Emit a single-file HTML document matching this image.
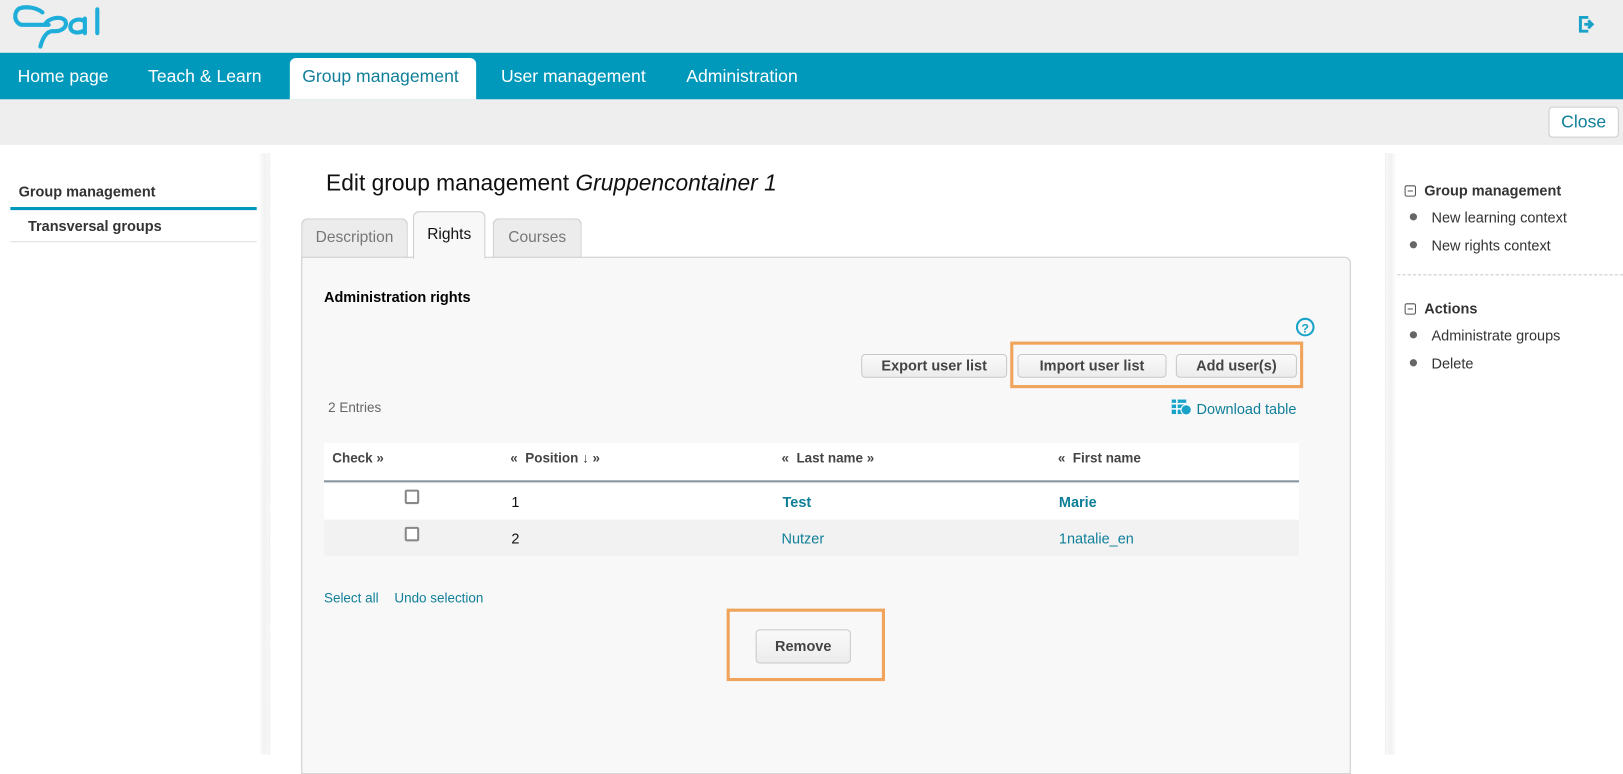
<!DOCTYPE html>
<html><head><meta charset="utf-8"><style>
*{box-sizing:border-box;margin:0;padding:0}
body{width:1623px;height:729px;position:relative;overflow:hidden;background:#fff;font-family:"Liberation Sans",Arial,sans-serif;color:#333}
#w{position:absolute;left:0;top:0;width:1568px;height:705px;transform:scale(1.03508);transform-origin:0 0}
.a{position:absolute}
.nav{top:51px;left:0;width:1568px;height:45px;background:#0099bb}
.nav span{position:absolute;top:13px;color:#fff;font-size:17px}
.btn{position:absolute;border:1px solid #c8c8c8;border-radius:4px;background:linear-gradient(#fafafa,#ececec);font-weight:bold;color:#444;font-size:14px;text-align:center;line-height:20px}
.link{color:#0f7f99}
.dot{position:absolute;width:7px;height:7px;border-radius:50%;background:#666}
.minus{position:absolute;width:11px;height:11px;border:1px solid #555;border-radius:2px}
.minus:after{content:"";position:absolute;left:2px;top:4px;width:5px;height:1px;background:#555}
.cb{position:absolute;width:14px;height:14px;border:2px solid #888;border-radius:2px;background:#fff}
</style></head><body><div id="w">
<div class="a" style="top:0;left:0;width:1568px;height:51px;background:#eee"></div>
<svg class="a" style="left:0;top:0" width="100" height="50" viewBox="0 0 100 50" fill="none" stroke="#1eaed9" stroke-width="4" stroke-linecap="round">
<g transform="translate(3,3)">
<path d="M38 9 C32 4 22 3 16 5 C10 8 10 19 18 21 L44 21"/>
<path d="M40 21 C44 14 56 12 60 17 C63 23 56 28 48 27 C42 27 38 34 36 42"/>
<path d="M79 18 C74 14 65 16 65 23 C65 29 73 30 79 26 M79 15 L79 29"/>
<path d="M91 6 L91 29"/>
</g>
</svg>
<svg class="a" style="left:1524px;top:14px" width="19" height="19" viewBox="0 0 20 20"><path d="M11 3 H3 V17 H11" fill="none" stroke="#1aa3c8" stroke-width="3"/><path d="M7 10 H15 M11 6 L15 10 L11 14" fill="none" stroke="#1aa3c8" stroke-width="3"/></svg>
<div class="a nav">
<span style="left:17px">Home page</span>
<span style="left:143px">Teach &amp; Learn</span>
<div class="a" style="left:280px;top:5px;width:180px;height:40px;background:#fff;border-radius:6px 6px 0 0"></div>
<span style="left:292px;color:#0f7f99">Group management</span>
<span style="left:484px">User management</span>
<span style="left:663px">Administration</span>
</div>
<div class="a" style="top:96px;left:0;width:1568px;height:44px;background:#eee"></div>
<div class="a" style="left:1496px;top:103px;width:68px;height:30px;border:1px solid #ccc;border-radius:4px;background:#fff;color:#0f7f99;font-size:17px;text-align:center;line-height:28px">Close</div>
<div class="a" style="left:18px;top:177px;font-size:14px;font-weight:bold">Group management</div>
<div class="a" style="left:10px;top:200px;width:238px;height:3px;background:#0099bb"></div>
<div class="a" style="left:27px;top:210px;font-size:14px;font-weight:bold">Transversal groups</div>
<div class="a" style="left:10px;top:233px;width:238px;height:1px;background:#ddd"></div>
<div class="a" style="left:250px;top:148px;width:11px;height:581px;background:linear-gradient(90deg,#fff,#f2f2f2 50%,#f7f7f7);border-right:1px dotted #e4e4e4"></div>
<div class="a" style="left:1338px;top:148px;width:11px;height:581px;background:linear-gradient(90deg,#f7f7f7,#f2f2f2 50%,#fff);border-left:1px dotted #e4e4e4"></div>
<div class="a" style="left:315px;top:164px;font-size:22px;color:#111">Edit group management <i>Gruppencontainer 1</i></div>
<div class="a" style="left:291px;top:211px;width:103px;height:38px;background:#ececec;border:1px solid #ccc;border-bottom:none;border-radius:6px 6px 0 0;color:#777;font-size:15px;text-align:center;line-height:36px">Description</div>
<div class="a" style="left:476px;top:211px;width:86px;height:38px;background:#ececec;border:1px solid #ccc;border-bottom:none;border-radius:6px 6px 0 0;color:#777;font-size:15px;text-align:center;line-height:36px">Courses</div>
<div class="a" style="left:291px;top:248px;width:1014px;height:500px;background:#f8f8f8;border:1px solid #ccc;border-radius:0 6px 0 0"></div>
<div class="a" style="left:399px;top:204px;width:70px;height:46px;background:#f8f8f8;border:1px solid #ccc;border-bottom:none;border-radius:6px 6px 0 0;color:#111;font-size:15px;text-align:center;line-height:44px">Rights</div>
<div class="a" style="left:313px;top:279px;font-size:14px;font-weight:bold;color:#000">Administration rights</div>
<svg class="a" style="left:1251px;top:306px" width="20" height="20" viewBox="0 0 20 20"><circle cx="10" cy="10" r="8" fill="none" stroke="#1aa3c8" stroke-width="2"/><text x="10" y="15" text-anchor="middle" font-family="Liberation Sans" font-weight="bold" font-size="12" fill="#1aa3c8">?</text></svg>
<div class="btn" style="left:832px;top:342px;width:141px;height:23px">Export user list</div>
<div class="btn" style="left:983px;top:342px;width:144px;height:23px">Import user list</div>
<div class="btn" style="left:1136px;top:342px;width:117px;height:23px">Add user(s)</div>
<div class="a" style="left:976px;top:330px;width:283px;height:45px;border:3px solid #f0a35a"></div>
<div class="a" style="left:317px;top:386px;font-size:13px;color:#666">2 Entries</div>
<svg class="a" style="left:1131px;top:385px" width="21" height="17" viewBox="0 0 21 17"><rect x="1" y="1" width="14" height="14" fill="#1aa3c8"/><path d="M1 5H15M1 10H15M6 1V15" stroke="#fff" stroke-width="1.5"/><circle cx="15" cy="11" r="5" fill="#1aa3c8" stroke="#fff"/></svg>
<div class="a link" style="left:1156px;top:387px;font-size:14px">Download table</div>
<div class="a" style="left:313px;top:428px;width:942px;height:38px;background:#fff;border-bottom:2px solid #8a93a0"></div>
<div class="a" style="left:321px;top:435px;font-size:13px;font-weight:bold;color:#444">Check »</div>
<div class="a" style="left:493px;top:435px;font-size:13px;font-weight:bold;color:#444">«&nbsp; Position ↓ »</div>
<div class="a" style="left:755px;top:435px;font-size:13px;font-weight:bold;color:#444">«&nbsp; Last name »</div>
<div class="a" style="left:1022px;top:435px;font-size:13px;font-weight:bold;color:#444">«&nbsp; First name</div>
<div class="a" style="left:313px;top:467px;width:942px;height:35px;background:#fff"></div>
<div class="a" style="left:313px;top:502px;width:942px;height:35px;background:#f2f2f2"></div>
<div class="cb" style="left:391px;top:473px"></div>
<div class="cb" style="left:391px;top:509px"></div>
<div class="a" style="left:494px;top:477px;font-size:14px;color:#111">1</div>
<div class="a" style="left:494px;top:512px;font-size:14px;color:#111">2</div>
<div class="a link" style="left:756px;top:477px;font-size:14px;font-weight:bold">Test</div>
<div class="a link" style="left:1023px;top:477px;font-size:14px;font-weight:bold">Marie</div>
<div class="a link" style="left:755px;top:512px;font-size:14px">Nutzer</div>
<div class="a link" style="left:1023px;top:512px;font-size:14px">1natalie_en</div>
<div class="a link" style="left:313px;top:570px;font-size:13px">Select all</div>
<div class="a link" style="left:381px;top:570px;font-size:13px">Undo selection</div>
<div class="btn" style="left:730px;top:608px;width:92px;height:33px;line-height:31px">Remove</div>
<div class="a" style="left:702px;top:588px;width:153px;height:70px;border:3px solid #f0a35a"></div>
<div class="minus" style="left:1357px;top:179px"></div>
<div class="a" style="left:1376px;top:176px;font-size:14px;font-weight:bold">Group management</div>
<div class="dot" style="left:1362px;top:206px"></div>
<div class="a" style="left:1383px;top:202px;font-size:14px">New learning context</div>
<div class="dot" style="left:1362px;top:233px"></div>
<div class="a" style="left:1383px;top:229px;font-size:14px">New rights context</div>
<div class="a" style="left:1350px;top:265px;width:218px;border-top:1px dashed #ccc"></div>
<div class="minus" style="left:1357px;top:293px"></div>
<div class="a" style="left:1376px;top:290px;font-size:14px;font-weight:bold">Actions</div>
<div class="dot" style="left:1362px;top:320px"></div>
<div class="a" style="left:1383px;top:316px;font-size:14px">Administrate groups</div>
<div class="dot" style="left:1362px;top:347px"></div>
<div class="a" style="left:1383px;top:343px;font-size:14px">Delete</div>
</div></body></html>
